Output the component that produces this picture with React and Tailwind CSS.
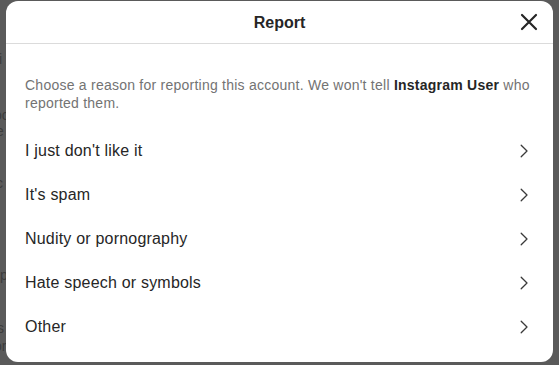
import React from "react";

const reasons = [
  "I just don't like it",
  "It's spam",
  "Nudity or pornography",
  "Hate speech or symbols",
  "Other",
];

// fragments of the page that sits behind the dark overlay
const behind = [
  { t: "li", c: "top-[52px] left-[-4px]" },
  { t: "oc", c: "top-[108px] left-[-6px]" },
  { t: "e", c: "top-[124px] left-[-4px]" },
  { t: "c", c: "top-[176px] left-[-4px]" },
  { t: "p", c: "top-[268px] left-0" },
  { t: "s", c: "top-[321px] left-[-3px]" },
  { t: "or", c: "top-[339px] left-[-6px]" },
];

const Chevron = () => (
  <svg width="8" height="14" viewBox="0 0 8 14" fill="none" className="text-[#3a3a3a]">
    <path d="M1.2 1.2l5.8 5.8-5.8 5.8" stroke="currentColor" strokeWidth="1.3" strokeLinecap="round" strokeLinejoin="round" />
  </svg>
);

const Close = () => (
  <svg width="18" height="18" viewBox="0 0 18 18" fill="none" className="text-[#262626]">
    <path d="M2 2l14 14M16 2L2 16" stroke="currentColor" strokeWidth="2.2" strokeLinecap="round" />
  </svg>
);

export default function App() {
  return (
    <div
      className="relative w-[559px] h-[365px] overflow-hidden bg-[#5a5a5a] pl-[6px] pt-[1px]"
      style={{ fontFamily: "'Liberation Sans', Arial, sans-serif" }}
    >
      {behind.map((b) => (
        <span key={b.t + b.c} className={`absolute text-[14px] leading-none text-[#3c3c3c] ${b.c}`}>
          {b.t}
        </span>
      ))}

      <div className="relative w-[547px] h-[361px] bg-white rounded-[12px] flex flex-col">
        {/* header */}
        <div className="relative h-[43px] border-b border-[#dbdbdb] flex items-center justify-center pt-[2px]">
          <span className="text-[16px] font-bold text-[#262626]">Report</span>
          <button className="absolute right-[15px] top-[12px] p-0">
            <Close />
          </button>
        </div>

        <div className="px-[19px] pt-[32px]">
          <p className="text-[14px] leading-[18px] tracking-[0.24px] text-[#737373]">
            Choose a reason for reporting this account. We won't tell{" "}
            <span className="font-bold text-[#262626]">Instagram User</span> who reported them.
          </p>
        </div>

        <ul className="px-[19px] pt-[17px]">
          {reasons.map((r) => (
            <li key={r} className="h-[44px] flex items-center justify-between">
              <span className="text-[16px] tracking-[0.2px] text-[#262626]">{r}</span>
              <span className="pr-[6px] flex">
                <Chevron />
              </span>
            </li>
          ))}
        </ul>
      </div>
    </div>
  );
}
